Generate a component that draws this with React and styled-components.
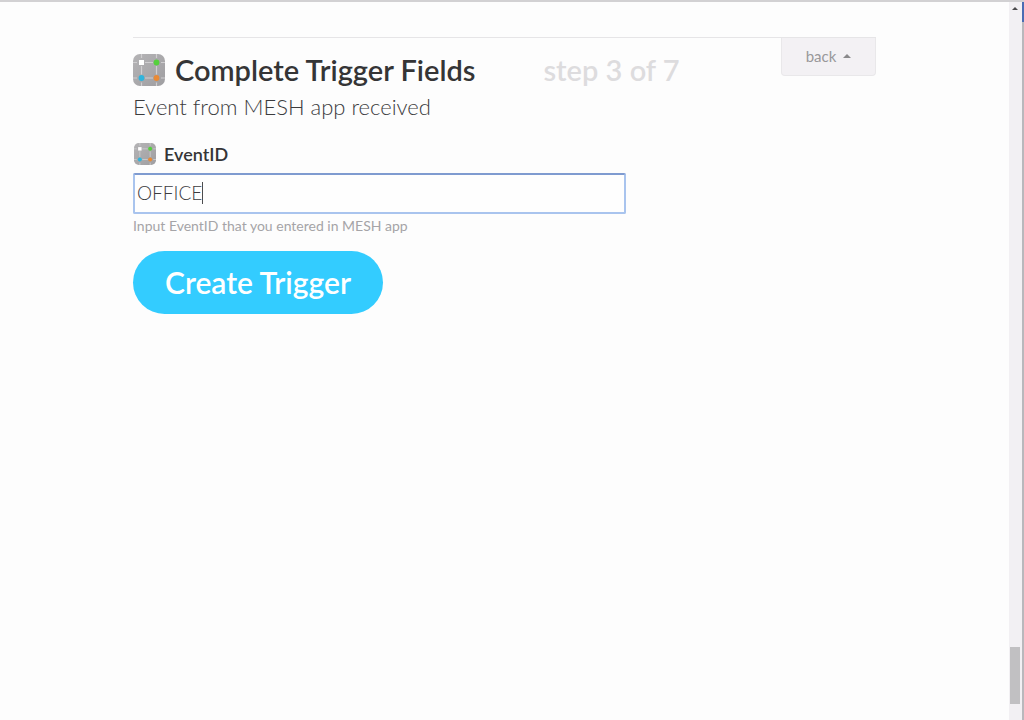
import { useState } from "react";
import styled, { createGlobalStyle } from "styled-components";

export default function App() {
    const [eventId, setEventId] = useState("OFFICE");

    return (
        <>
            <GlobalStyle />
            <StyledWindow>
                <StyledPage>
                    <StyledForm onSubmit={(e) => e.preventDefault()}>
                        <StyledHeader>
                            <StyledTitle><MeshIcon size={32} />Complete Trigger Fields</StyledTitle>
                            <StyledStep>step 3 of 7</StyledStep>
                            <StyledBack type="button">back <StyledArrow $size={4} /></StyledBack>
                        </StyledHeader>
                        <StyledSubtitle>Event from MESH app received</StyledSubtitle>
                        <StyledLabel htmlFor="event-id"><MeshIcon size={22} />EventID</StyledLabel>
                        <StyledField>
                            <StyledInput id="event-id" type="text" autoComplete="off" aria-describedby="event-id-hint" value={eventId} onChange={(e) => setEventId(e.target.value)} />
                            <StyledCaretLine aria-hidden="true"><span>{eventId}</span></StyledCaretLine>
                        </StyledField>
                        <StyledHint id="event-id-hint">Input EventID that you entered in MESH app</StyledHint>
                        <StyledSubmit type="submit">Create Trigger</StyledSubmit>
                    </StyledForm>
                </StyledPage>
                <StyledScrollbar aria-hidden="true">
                    <StyledArrow $size={3} $dark />
                    <StyledThumb />
                </StyledScrollbar>
                <StyledEdge />
            </StyledWindow>
        </>
    );
}

const MeshIcon = ({ size }) => (
    <svg width={size} height={size} viewBox="0 0 32 32" aria-hidden="true">
        <defs>
            <linearGradient id={`mesh-${size}`} x1="0" y1="0" x2="1" y2="1">
                <stop offset="0" stopColor="#b5b4b6" />
                <stop offset="1" stopColor="#9f9ea1" />
            </linearGradient>
        </defs>
        <rect width="32" height="32" rx="7" fill={`url(#mesh-${size})`} />
        <path d="M8.5 0v4M8.5 12v8.5M8.5 28.5v3.5M23.5 0v4M23.5 12v8.5M23.5 28.5v3.5M0 8.5h4M12 8.5h8M28 8.5h4M0 24h4M12 24h8M28 24h4" stroke="#cfced0" strokeWidth="1.2" />
        <rect x="6" y="6" width="5" height="5" fill="#fff" />
        <circle cx="23.5" cy="8.5" r="2.9" fill="#55d03c" />
        <circle cx="8.5" cy="24" r="2.9" fill="#2fb4dc" />
        <circle cx="23.5" cy="24" r="2.9" fill="#e98a35" />
    </svg>
);

const GlobalStyle = createGlobalStyle`
* {
    box-sizing: border-box;
}
body {
    margin: 0;
    background: #fdfdfd;
    color: #353536;
    font-family: Lato, "Liberation Sans", sans-serif;
}
button, input {
    font-family: inherit;
}`

const StyledWindow = styled.div`
display: flex;
min-height: 100vh;
border-top: 2px solid #d2d1d3;
`
const StyledPage = styled.main`
flex: 1;
padding: 35px 24px;
`
const StyledForm = styled.form`
max-width: 743px;
margin: 0 auto;
border-top: 1px solid #e6e5e7;
`
const StyledHeader = styled.header`
display: flex;
align-items: flex-start;
height: 55px;
`
const StyledTitle = styled.h1`
display: flex;
align-items: center;
gap: 10px;
margin: 15px 68px 0 0;
font-size: 29px;
line-height: 34px;
font-weight: 600;
`
const StyledStep = styled.span`
margin-top: 15px;
color: #dddcde;
font-size: 29px;
line-height: 34px;
font-weight: 600;
`
const StyledBack = styled.button`
display: flex;
align-items: center;
justify-content: center;
gap: 7px;
width: 95px;
height: 38px;
margin-left: auto;
padding: 0 6px 2px;
border: 1px solid #e9e8ea;
border-top: none;
border-radius: 0 0 4px 4px;
background: #f3f1f4;
color: #99989a;
font-size: 15px;
`
const StyledArrow = styled.span`
width: 0;
height: 0;
border: ${({ $size }) => $size}px solid transparent;
border-top: none;
border-bottom-color: ${({ $dark }) => ($dark ? "#4a4a4c" : "#8a898b")};
`
const StyledSubtitle = styled.p`
margin: 0;
color: #3c3c3e;
font-size: 22px;
line-height: 28px;
font-weight: 300;
`
const StyledLabel = styled.label`
display: flex;
align-items: center;
gap: 8px;
margin-top: 21px;
padding-left: 1px;
font-size: 18px;
line-height: 24px;
font-weight: 600;
`
const StyledField = styled.div`
position: relative;
max-width: 493px;
margin-top: 7px;
`
const StyledInput = styled.input`
display: block;
width: 100%;
height: 41px;
padding: 0 2px 2px;
border: 2px solid #a9c4ee;
border-top-color: #7f9bd0;
border-radius: 2px;
outline: none;
background: #fefefe;
color: #3c3c3e;
font-size: 19px;
font-weight: 300;
`
const StyledCaretLine = styled.div`
position: absolute;
top: 9px;
left: 4px;
pointer-events: none;
font-size: 19px;
line-height: 22px;
font-weight: 300;
color: transparent;
border-right: 1px solid #4c4c4e;
`
const StyledHint = styled.p`
margin: 3px 0 0;
color: #a5a4a7;
font-size: 14px;
line-height: 18px;
`
const StyledSubmit = styled.button`
display: block;
height: 63px;
margin-top: 16px;
padding: 0 32px 2px;
border: none;
border-radius: 32px;
background: #33ccff;
color: #fff;
font-size: 30px;
font-weight: 600;
`
const StyledScrollbar = styled.div`
display: flex;
flex-direction: column;
align-items: center;
justify-content: space-between;
width: 13px;
padding: 5px 1px 16px 0;
background: #f2f0f3;
`
const StyledThumb = styled.div`
width: 10px;
height: 57px;
background: #c1c0c2;
`
const StyledEdge = styled.div`
width: 2px;
background: linear-gradient(#4a6cb3 20px, #b9b8bc 20px);
`
